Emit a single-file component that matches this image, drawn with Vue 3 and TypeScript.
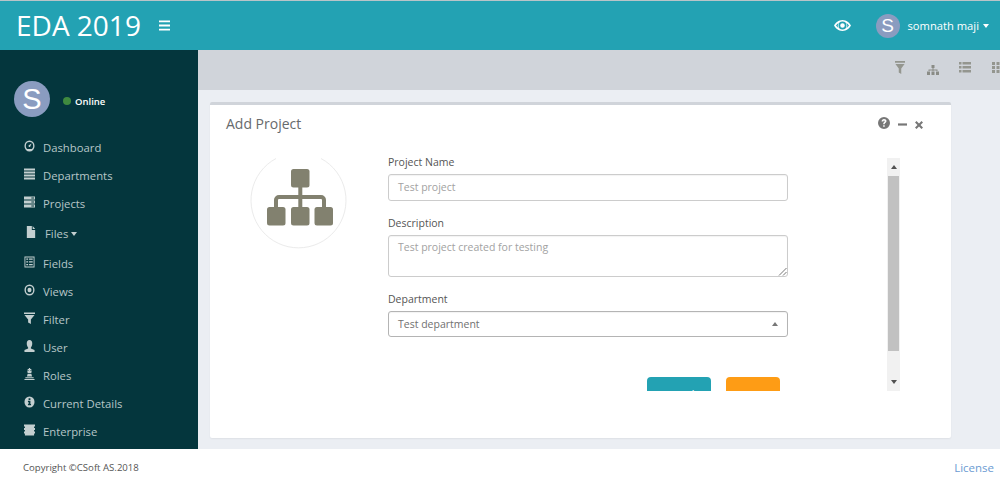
<script setup lang="ts">
interface NavItem { label: string; icon: string; caret?: boolean; tall?: boolean }
const nav: NavItem[] = [
  { label: 'Dashboard', icon: 'dash' },
  { label: 'Departments', icon: 'lines' },
  { label: 'Projects', icon: 'server' },
  { label: 'Files', icon: 'file', caret: true, tall: true },
  { label: 'Fields', icon: 'table' },
  { label: 'Views', icon: 'target' },
  { label: 'Filter', icon: 'filter' },
  { label: 'User', icon: 'user' },
  { label: 'Roles', icon: 'pawn' },
  { label: 'Current Details', icon: 'info' },
  { label: 'Enterprise', icon: 'book' }
]
</script>

<template>
  <div class="page">
    <header class="topbar">
      <h1 class="brand">EDA 2019</h1>
      <svg class="burger" width="11" height="11" viewBox="0 0 11 11"><path d="M0 .5h11v1.800H0zM0 4.600h11v1.800H0zM0 8.700h11v1.800H0z" fill="#fff" /></svg>
      <div class="spacer"></div>
      <svg class="eye" width="17" height="11" viewBox="0 0 17 11"><path fill="#fff" fill-rule="evenodd" d="M8.500 0C12.500 0 15.500 2.800 17 5.500 15.500 8.200 12.500 11 8.500 11S1.500 8.200 0 5.500C1.500 2.800 4.500 0 8.500 0zM8.500 1.500a4 4 0 1 0 0 8 4 4 0 0 0 0-8zM8.500 3.200a2.300 2.300 0 1 1 0 4.600 2.300 2.300 0 0 1 0-4.600zM2 5.500c.7 1 1.500 1.800 2.500 2.500a5 5 0 0 1 0-5C3.500 3.700 2.700 4.500 2 5.500zM15 5.500c-.7-1-1.500-1.800-2.500-2.500a5 5 0 0 1 0 5c1-.7 1.800-1.500 2.500-2.500z" /></svg>
      <span class="avatar small">S</span>
      <span class="uname">somnath maji</span>
      <span class="caret"></span>
    </header>

    <div class="middle">
      <aside class="sidebar">
        <div class="profile">
          <span class="avatar big">S</span>
          <span class="dot"></span>
          <span class="online">Online</span>
        </div>
        <nav class="nav">
          <div v-for="item in nav" :key="item.label" class="nav-item" :class="{ tall: item.tall }">
            <svg class="nav-icon" :class="{ narrow: item.tall }" width="11" height="12" viewBox="0 0 12 12" fill="#c3cfd0" preserveAspectRatio="none">
              <template v-if="item.icon === 'dash'">
                <path fill-rule="evenodd" d="M6 .5a5.500 5.500 0 1 1 0 11 5.500 5.500 0 0 1 0-11zM6 2a4 4 0 0 0-4 4c0 1.300.6 2.400 1.500 3.100h5C9.400 8.400 10 7.300 10 6a4 4 0 0 0-4-4z" />
                <path d="M5.200 5.300 8.300 3.600 6.700 6.700A1 1 0 1 1 5.200 5.300z" />
              </template>
              <path v-else-if="item.icon === 'lines'" d="M0 .5h12v2H0zM0 3.500h12v2H0zM0 6.500h12v2H0zM0 9.500h12v2H0z" />
              <path v-else-if="item.icon === 'server'" fill-rule="evenodd" d="M0 .5h12v3H0zM0 4.500h12v3H0zM0 8.500h12v3H0zM8 1.500v1h3v-1zM8 5.500v1h3v-1zM8 9.500v1h3v-1z" />
              <path v-else-if="item.icon === 'file'" d="M1 0h6v4h4v8H1zM8 0l3 3H8z" />
              <path v-else-if="item.icon === 'table'" fill-rule="evenodd" d="M.5.500h11v11H.5zM1.500 1.500v9h9v-9zM2.500 2.500h2v1.300h-2zM5.500 2.500h4v1.300h-4zM2.500 5.300h2v1.300h-2zM5.500 5.300h4v1.300h-4zM2.500 8h2v1.300h-2zM5.500 8h4v1.300h-4z" />
              <path v-else-if="item.icon === 'target'" fill-rule="evenodd" d="M6 .5a5.500 5.500 0 1 1 0 11 5.500 5.500 0 0 1 0-11zM6 2a4 4 0 1 0 0 8 4 4 0 0 0 0-8zM6 3.800a2.200 2.200 0 1 1 0 4.400 2.200 2.200 0 0 1 0-4.400z" />
              <path v-else-if="item.icon === 'filter'" d="M0 .5h12v1.500H0zM.5 3h11L7.500 7.500V12l-3-1.500v-3z" />
              <path v-else-if="item.icon === 'user'" d="M6 0c2 0 3 1.500 3 3.500S8 7 7.500 7.500V8.500L11.500 10v2H.5v-2L4.500 8.500V7.500C4 7 3 5.500 3 3.500S4 0 6 0z" />
              <path v-else-if="item.icon === 'pawn'" d="M5.300 0h1.400v1H8v1H6.700v.6H8.500L8 5H4L3.500 2.600H5.300V2H4V1h1.300zM4 5.800h4l.8 2.700H3.200zM1.500 9.300h9V10.300h-9zM.500 11h11v1H.5z" />
              <path v-else-if="item.icon === 'info'" fill-rule="evenodd" d="M6 .5a5.500 5.500 0 1 1 0 11 5.500 5.500 0 0 1 0-11zM5 2.200v1.700h2V2.200zM4.300 4.800v1.200H5v2H4.300v1.300h3.400V8H7V4.800z" />
              <path v-else d="M0 .5h12v2h-1v1.500h1v2h-1v1.500h1v2h-1V11.500H1V9.500H0v-2h1V6H0V4h1V2.500H0z" />
            </svg>
            <span class="nav-label">{{ item.label }}</span>
            <span v-if="item.caret" class="caret grey"></span>
          </div>
        </nav>
      </aside>

      <main class="content">
        <div class="toolbar">
          <svg class="tool funnel" width="10" height="13" viewBox="0 0 12 13" fill="#94968f" preserveAspectRatio="none"><path d="M0 0h12v1.800H0zM.5 3h11L7.500 7.500V13l-3-1.500v-4z" /></svg>
          <svg class="tool org" width="12" height="10" viewBox="0 0 12 10" fill="#8a8c86"><path d="M4.500 0h3v3h-3zM5.500 3h1v1.500H10.500V6h-1V5.500H6.500V6h-1v-.5H2.500V6h-1V4.500H5.500zM0 6.500h3V10H0zM4.500 6.500h3V10h-3zM9 6.500h3V10H9z" /></svg>
          <svg class="tool list" width="12" height="11" viewBox="0 0 12 11" fill="#94968f"><path d="M0 0h2.500v2.500H0zM3.500 0H12v2.500H3.500zM0 4h2.500v2.500H0zM3.500 4H12v2.500H3.500zM0 8h2.500v2.500H0zM3.500 8H12v2.500H3.500z" /></svg>
          <svg class="tool last" width="12" height="11" viewBox="0 0 12 11" fill="#94968f"><path d="M0 0h3v3H0zM4.500 0h3v3h-3zM9 0h3v3H9zM0 4h3v3H0zM4.500 4h3v3h-3zM9 4h3v3H9zM0 8h3v3H0zM4.500 8h3v3h-3zM9 8h3v3H9z" /></svg>
        </div>
        <section class="card">
          <div class="card-head">
            <h2 class="card-title">Add Project</h2>
            <div class="card-tools">
              <svg class="help" width="12" height="12" viewBox="0 0 12 12" fill="#777"><path fill-rule="evenodd" d="M6 0a6 6 0 1 1 0 12A6 6 0 0 1 6 0zM3.600 4.400h1.700C5.400 3.800 5.600 3.500 6 3.500c.4 0 .7.300.7.700 0 .8-1.500 1-1.500 2.600v.4h1.500v-.3c0-1 1.800-1.300 1.800-2.900C8.500 2.800 7.400 2 6 2 4.600 2 3.700 3 3.600 4.400zM5.200 8.200v1.600h1.500V8.200z" /></svg>
              <svg class="minus" width="9" height="3" viewBox="0 0 9 3" fill="#777"><path d="M0 .4h9v2.200H0z" /></svg>
              <svg class="close" width="8" height="8" viewBox="0 0 8 8" fill="#777"><path d="M1.500 0 4 2.500 6.500 0 8 1.500 5.500 4 8 6.500 6.500 8 4 5.500 1.500 8 0 6.500 2.500 4 0 1.500z" /></svg>
            </div>
          </div>
          <div class="card-body">
            <div class="emblem">
              <svg width="100" height="100" viewBox="0 0 100 100">
                <path d="M28 7.500A47.500 47.500 0 1 0 73 7.500" fill="none" stroke="#ebebeb" stroke-width="1" />
                <g fill="#82816f">
                  <rect x="43" y="18" width="18.500" height="18.500" rx="2.500" />
                  <rect x="19" y="56" width="18.500" height="18.500" rx="2.500" />
                  <rect x="43" y="56" width="18.500" height="18.500" rx="2.500" />
                  <rect x="66.500" y="56" width="18.500" height="18.500" rx="2.500" />
                  <rect x="50.300" y="36" width="4" height="20" />
                  <path d="M26 56v-7a5 5 0 0 1 5-5h42a5 5 0 0 1 5 5v7h-4v-7a1 1 0 0 0-1-1H31a1 1 0 0 0-1 1v7z" />
                </g>
              </svg>
            </div>
            <div class="scroller">
              <form class="form">
                <label class="lbl">Project Name</label>
                <div class="field one">Test project</div>
                <label class="lbl">Description</label>
                <div class="field area">Test project created for testing
                  <svg class="grip" width="9" height="9" viewBox="0 0 9 9"><path d="M8.500 1 1 8.500M8.500 5 5 8.500" stroke="#777" stroke-width="1" fill="none" /></svg>
                </div>
                <label class="lbl">Department</label>
                <div class="field select">
                  <span>Test department</span>
                  <span class="up"></span>
                </div>
                <div class="actions">
                  <button type="button" class="btn teal">Send</button>
                  <button type="button" class="btn orange">Reset</button>
                </div>
              </form>
              <div class="scrollbar">
                <span class="arrow up-a"></span>
                <span class="thumb"></span>
                <span class="gap"></span>
                <span class="arrow down-a"></span>
              </div>
            </div>
          </div>
        </section>
      </main>
    </div>

    <footer class="footer">
      <span class="copy">Copyright ©CSoft AS.2018</span>
      <a class="license">License</a>
    </footer>
  </div>
</template>

<style>
html, body { margin: 0; height: 100%; overflow: hidden; background: #fff; }
</style>

<style scoped>
.page {
  width: 1000px;
  height: 484px;
  display: flex;
  flex-direction: column;
  font-family: "Open Sans", "Noto Sans", sans-serif;
  overflow: hidden;
}
.topbar {
  height: 49px;
  flex: none;
  box-sizing: content-box;
  border-top: 1px solid #b9c4c8;
  background: #23a2b3;
  display: flex;
  align-items: center;
  color: #fff;
  padding-left: 16px;
}
.brand {
  margin: 0;
  font-size: 28px;
  font-weight: 400;
  line-height: 49px;
  width: 143px;
  white-space: nowrap;
}
.burger { margin-top: -1px; }
.spacer { flex: 1; }
.eye { margin-right: 25px; }
.avatar {
  display: flex;
  align-items: center;
  justify-content: center;
  border-radius: 50%;
  background: #8a9cc0;
  color: #fff;
  font-family: "Liberation Sans", Arial, sans-serif;
  flex: none;
}
.avatar.small { width: 24px; height: 24px; font-size: 19px; margin-right: 8px; }
.avatar.big { width: 36px; height: 36px; font-size: 29px; }
.uname { font-size: 11.200px; white-space: nowrap; }
.caret {
  width: 0;
  height: 0;
  border-left: 3.500px solid transparent;
  border-right: 3.500px solid transparent;
  border-top: 4px solid #fff;
  margin: 0 11px 0 4px;
}
.caret.grey { border-top-color: #c3cfd0; border-left-width: 3.750px; border-right-width: 3.750px; margin: 1px 0 0 3px; }
.middle { flex: 1; display: flex; min-height: 0; }
.sidebar {
  width: 198px;
  flex: none;
  background: #04363d;
  box-sizing: border-box;
  padding-top: 31px;
}
.profile { display: flex; align-items: center; padding-left: 14px; height: 36px; }
.dot {
  width: 8px;
  height: 8px;
  border-radius: 50%;
  background: #3f8a3f;
  margin: 4px 4px 0 13px;
}
.online { font-size: 9.500px; color: #fff; font-weight: 600; margin-top: 4px; }
.nav { margin-top: 16px; }
.nav-item {
  height: 28px;
  display: flex;
  align-items: center;
  padding-left: 24px;
  color: #b7c6c8;
  font-size: 11.300px;
  white-space: nowrap;
}
.nav-item.tall { height: 32px; padding-left: 26px; }
.nav-icon { margin: -3px 8px 0 0; flex: none; }
.nav-icon.narrow { width: 10px; margin-right: 9px; }
.content {
  flex: 1;
  min-width: 0;
  background: #ebeef3;
  display: flex;
  flex-direction: column;
}
.toolbar {
  height: 40px;
  flex: none;
  background: #d0d4da;
  display: flex;
  justify-content: flex-end;
  align-items: flex-start;
  padding-top: 11px;
  box-sizing: border-box;
  overflow: hidden;
  gap: 20px;
}
.tool.funnel { margin-right: 1px; }
.tool.org { margin-top: 4px; margin-left: 1px; }
.tool.list { margin-top: 1px; }
.tool.last { margin: 1px -4px 0 1px; }
.card {
  margin: 12px 0 0 12px;
  width: 741px;
  height: 336px;
  box-sizing: border-box;
  background: #fff;
  border-top: 3px solid #d0d4da;
  border-radius: 2px;
  box-shadow: 0 1px 2px rgba(0, 0, 0, .06);
  display: flex;
  flex-direction: column;
}
.card-head {
  height: 39px;
  flex: none;
  display: flex;
  align-items: center;
  justify-content: space-between;
  padding: 0 28px 0 16px;
}
.card-title { margin: -2px 0 0; font-size: 14px; font-weight: 400; color: #676a6c; }
.card-tools { display: flex; align-items: center; gap: 8px; }
.help { margin-top: -4px; }
.minus { margin-top: -1px; }
.card-body { display: flex; align-items: flex-start; padding-left: 38px; }
.emblem { width: 100px; height: 100px; flex: none; margin-top: 7px; }
.scroller {
  display: flex;
  margin: 11px 0 0 40px;
  height: 236px;
  overflow: hidden;
}
.form { width: 400px; display: flex; flex-direction: column; align-items: stretch; }
.lbl { font-size: 10.500px; color: #555; line-height: 15px; margin: 0 0 4px; flex: none; }
.field {
  box-sizing: border-box;
  border: 1px solid #ccc;
  border-radius: 3px;
  font-size: 10.500px;
  color: #a2a2a2;
  padding: 0 9px;
  box-shadow: inset 0 1px 1px rgba(0, 0, 0, .05);
  position: relative;
  flex: none;
}
.one { height: 27px; line-height: 25px; margin-bottom: 15px; }
.area { height: 42px; line-height: 22px; margin-bottom: 15px; }
.grip { position: absolute; right: 0; bottom: 0; }
.select {
  height: 26px;
  line-height: 24px;
  border-color: #b4b4b4;
  color: #707070;
  display: flex;
  justify-content: space-between;
  align-items: center;
}
.up {
  width: 0;
  height: 0;
  border-left: 3.500px solid transparent;
  border-right: 3.500px solid transparent;
  border-bottom: 4px solid #777;
}
.actions { display: flex; margin-top: 40px; padding-left: 259px; gap: 15px; flex: none; }
.btn {
  height: 34px;
  border: 0;
  border-radius: 4px;
  color: #fff;
  font: 12px "Open Sans", sans-serif;
  padding: 2px 0 0 3px;
}
.teal { width: 64px; background: #23a2b3; }
.orange { width: 54px; background: #fe9c15; }
.scrollbar {
  margin: 3px 0 0 99px;
  width: 13px;
  height: 233px;
  background: #f1f1f1;
  display: flex;
  flex-direction: column;
  align-items: center;
  flex: none;
}
.arrow { height: 18px; flex: none; display: flex; }
.up-a::before, .down-a::before {
  content: "";
  margin: auto;
  width: 0;
  height: 0;
  border-left: 3.500px solid transparent;
  border-right: 3.500px solid transparent;
}
.up-a::before { border-bottom: 4px solid #505050; }
.down-a::before { border-top: 4px solid #505050; }
.thumb { width: 11px; height: 175px; background: #c1c1c1; flex: none; }
.gap { flex: 1; }
.footer {
  height: 35px;
  flex: none;
  background: #fff;
  display: flex;
  justify-content: space-between;
  align-items: center;
  padding: 2px 6px 0 23px;
  box-sizing: border-box;
}
.copy { font-size: 9.600px; color: #555; }
.license { font-size: 11.500px; color: #6c9bd2; }
</style>
